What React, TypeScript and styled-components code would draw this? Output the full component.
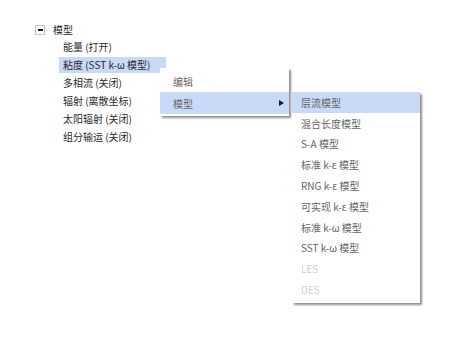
import styled, { createGlobalStyle } from 'styled-components'

interface MenuEntry {
  label: string
  active?: boolean
  disabled?: boolean
  submenu?: boolean
}

const treeChildren = [
  { label: '能量 (打开)' },
  { label: '粘度 (SST k-ω 模型)', selected: true },
  { label: '多相流 (关闭)' },
  { label: '辐射 (离散坐标)' },
  { label: '太阳辐射 (关闭)' },
  { label: '组分输运 (关闭)' },
]

const contextItems: MenuEntry[] = [
  { label: '编辑' },
  { label: '模型', active: true, submenu: true },
]

const modelItems: MenuEntry[] = [
  { label: '层流模型', active: true },
  { label: '混合长度模型' },
  { label: 'S-A 模型' },
  { label: '标准 k-ε 模型' },
  { label: 'RNG k-ε 模型' },
  { label: '可实现 k-ε 模型' },
  { label: '标准 k-ω 模型' },
  { label: 'SST k-ω 模型' },
  { label: 'LES', disabled: true },
  { label: 'DES', disabled: true },
]

export default function App() {
  return (
    <>
      <GlobalStyle />
      <Page>
        <Tree>
          <RootRow>
            <Toggle />
            <Label>模型</Label>
          </RootRow>
          <Children>
            {treeChildren.map(c => (
              <ChildRow key={c.label}>
                <Label $selected={c.selected}>{c.label}</Label>
              </ChildRow>
            ))}
          </Children>
        </Tree>

        <ContextMenu>
          {contextItems.map(item => (
            <ContextItem key={item.label} $active={item.active}>
              <span>{item.label}</span>
              {item.submenu && <Arrow />}
            </ContextItem>
          ))}
        </ContextMenu>

        <SubMenu>
          {modelItems.map(item => (
            <SubItem
              key={item.label}
              $active={item.active}
              $disabled={item.disabled}
            >
              {item.label}
            </SubItem>
          ))}
        </SubMenu>
      </Page>
    </>
  )
}

const GlobalStyle = createGlobalStyle`
  html, body {
    margin: 0;
    padding: 0;
    background: #ffffff;
  }

  body {
    font-family: "Noto Sans CJK SC", "Noto Sans", sans-serif;
    font-size: 10px;
    color: #333;
  }
`

const Page = styled.div`
  position: relative;
  width: 452px;
  height: 341px;
  overflow: hidden;
`

const Tree = styled.div`
  display: flex;
  flex-direction: column;
  padding: 21px 0 0 35px;
`

const RootRow = styled.div`
  display: flex;
  align-items: center;
  gap: 8px;
  height: 17px;
`

const Toggle = styled.span`
  position: relative;
  box-sizing: border-box;
  width: 10px;
  height: 10px;
  border: 1px solid #c4c4c4;
  background: #fff;

  &::after {
    content: '';
    position: absolute;
    left: 1.5px;
    top: 3.5px;
    width: 5px;
    height: 1.6px;
    background: #111;
  }
`

const Children = styled.div`
  display: flex;
  flex-direction: column;
  padding-left: 28px;
`

const ChildRow = styled.div`
  display: flex;
  align-items: center;
  height: 18px;
`

const Label = styled.span<{ $selected?: boolean }>`
  line-height: 16px;
  white-space: nowrap;
  color: #2a2a2a;
  ${p =>
    p.$selected &&
    `
    background: #c9d9f8;
    margin-left: -4px;
    padding: 0 16px 0 4px;
  `}
`

const ContextMenu = styled.div`
  position: absolute;
  left: 160px;
  top: 68px;
  width: 129px;
  padding: 2px 0;
  background: #fff;
  box-shadow: 2px 2px 2px rgba(0, 0, 0, 0.45);
`

const ContextItem = styled.div<{ $active?: boolean }>`
  display: flex;
  align-items: center;
  justify-content: space-between;
  height: 22px;
  padding: 0 5px 0 13px;
  color: #666;
  background: ${p => (p.$active ? '#c9d9f8' : 'transparent')};
`

const Arrow = styled.span`
  width: 0;
  height: 0;
  border-left: 5px solid #1a1a1a;
  border-top: 3.5px solid transparent;
  border-bottom: 3.5px solid transparent;
`

const SubMenu = styled.div`
  position: absolute;
  left: 292px;
  top: 92px;
  width: 128px;
  padding: 0 0 3px;
  background: #fff;
  box-shadow: 2px 2px 2px rgba(0, 0, 0, 0.45);
`

const SubItem = styled.div<{ $active?: boolean; $disabled?: boolean }>`
  display: flex;
  align-items: center;
  height: 20.8px;
  padding-left: 9px;
  white-space: nowrap;
  color: ${p => (p.$disabled ? '#cfcfcf' : '#666')};
  background: ${p => (p.$active ? '#c9d9f8' : 'transparent')};
`
